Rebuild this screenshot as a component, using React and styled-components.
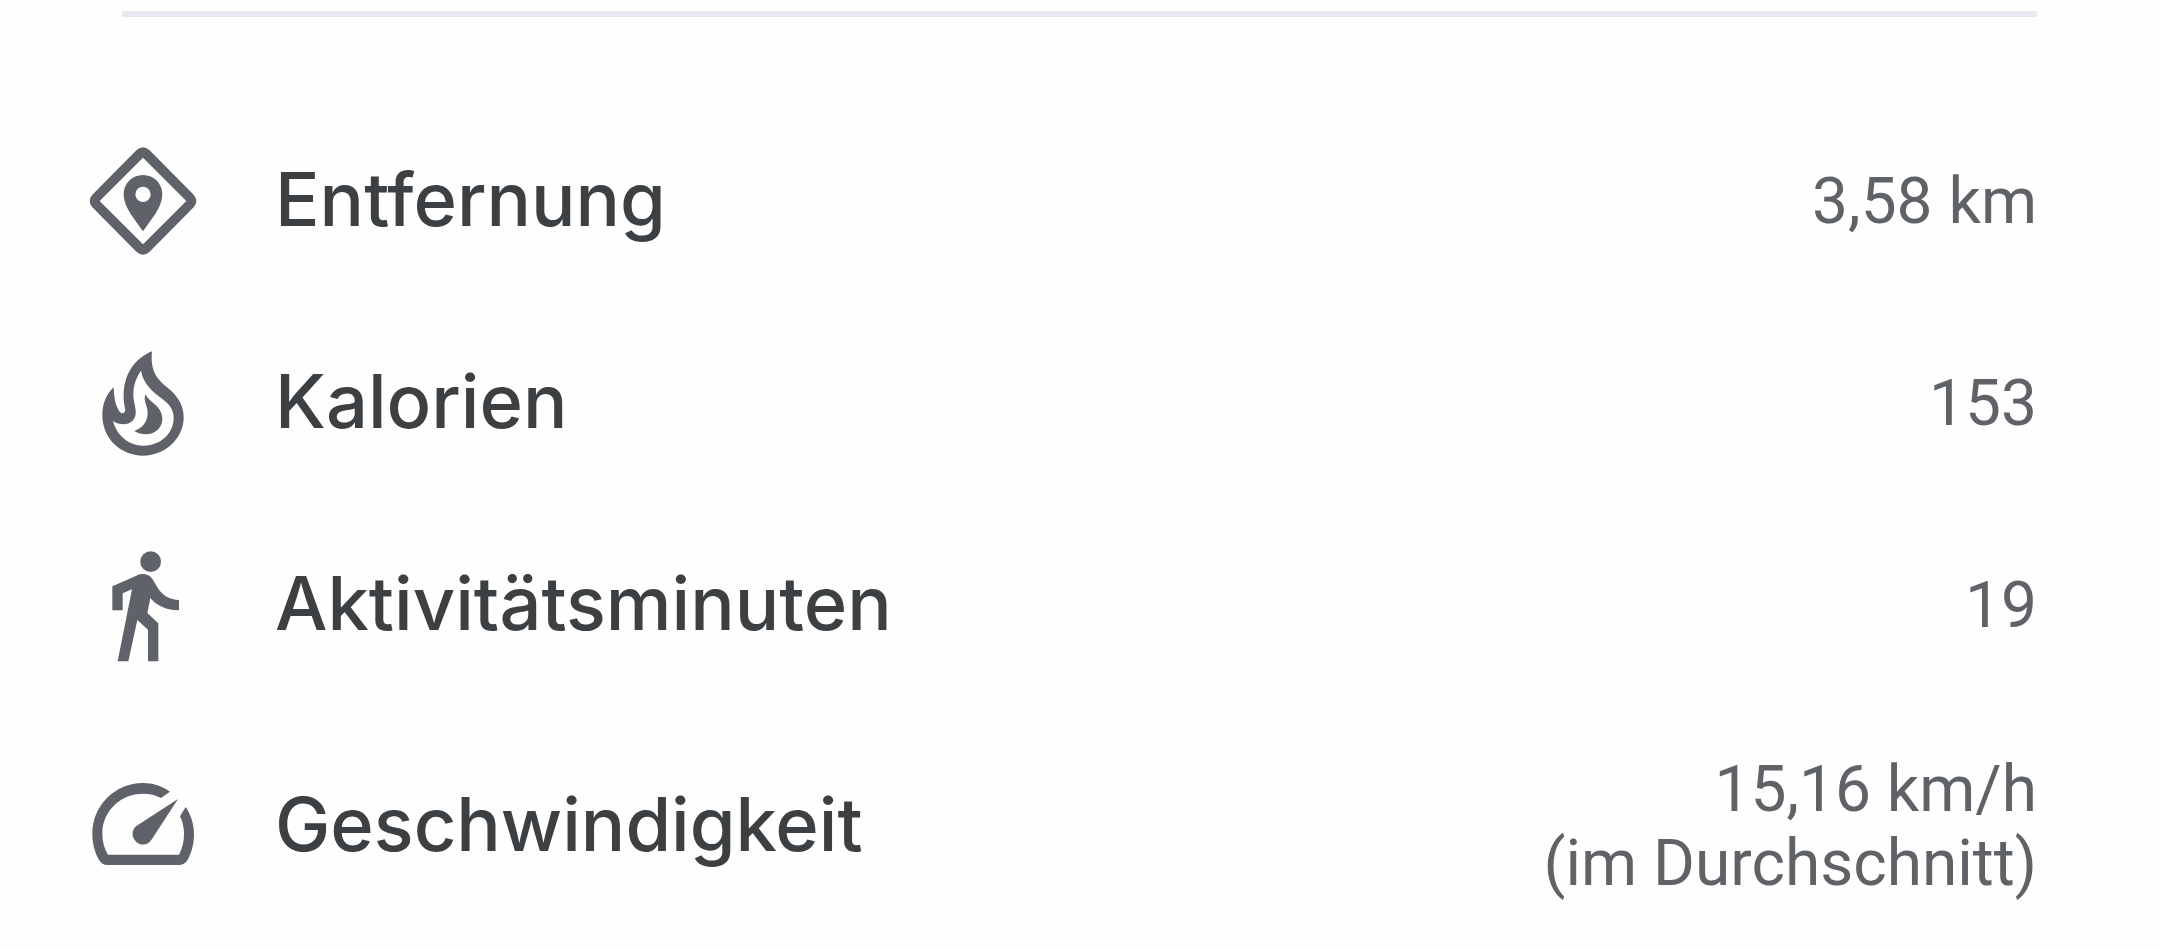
import React from 'react';
import styled, { createGlobalStyle } from 'styled-components';

const DistanceIcon = () => (
  <Icon viewBox="39 33 360 360" aria-hidden="true">
    <path
      fillRule="evenodd"
      d="M200 57Q219 41 238 57L371 191Q387 210 371 229L238 363Q219 379 200 363L67 229Q51 210 67 191ZM219 80L89 210L219 340L349 210Z"
    />
    <path
      fillRule="evenodd"
      d="M219 132C186 132 161 157 161 190C161 230 197 269 219 301C241 269 277 230 277 190C277 157 252 132 219 132ZM219 167A23 23 0 1 1 219 213A23 23 0 1 1 219 167Z"
    />
  </Icon>
);

const CaloriesIcon = () => (
  <Icon viewBox="39 42 360 360" aria-hidden="true">
    <path
      fillRule="evenodd"
      d="M246 64C188 88 160 140 161 200C161 220 165 232 166 241C164 250 156 253 150 246C136 229 132 202 131 172C108 193 97 222 97 256C97 325 151 377 219 377C287 377 341 325 341 262C341 228 325 202 303 182C275 158 238 137 246 64ZM213 122C221 164 248 184 277 207C298 222 311 239 311 264C311 312 270 347 219 347C175 347 140 315 129 273C148 286 173 286 188 272C208 252 190 224 190 193C190 165 199 142 213 122Z"
    />
    <path d="M226 193C238 217 277 228 277 267C277 294 254 313 229 313C214 313 202 309 193 303C219 293 232 276 233 250C234 229 219 214 226 193Z" />
  </Icon>
);

const WalkIcon = () => (
  <Icon viewBox="39 15 360 360" aria-hidden="true">
    <circle cx="242" cy="62" r="31" />
    <path d="M127 136L199 104C220 94 240 101 249 117L264 142C277 163 299 177 327 177V208C290 208 260 194 241 171L232 216L265 247V361H234V266L202 237L175 361H143L186 145L158 157V208H127Z" />
  </Icon>
);

const SpeedIcon = () => (
  <Icon viewBox="39 21 360 360" aria-hidden="true">
    <path d="M300 95L273 114C257 105 239 101 219 101C151 101 97 154 97 221C97 245 103 265 114 284H327C337 266 342 246 342 222C342 203 338 185 330 169L347 141C363 165 372 192 372 222C372 251 365 278 353 299C346 310 337 315 327 315H112C101 315 93 309 87 299C74 277 67 250 67 221C67 137 135 69 219 69C249 69 277 79 300 95Z" />
    <path d="M324 117L244 240C233 256 213 258 199 246C183 232 185 209 199 198Z" />
  </Icon>
);

const metrics = [
  { label: 'Entfernung', lines: ['3,58 km'], icon: DistanceIcon },
  { label: 'Kalorien', lines: ['153'], icon: CaloriesIcon },
  { label: 'Aktivitätsminuten', lines: ['19'], icon: WalkIcon },
  { label: 'Geschwindigkeit', lines: ['15,16 km/h', '(im Durchschnitt)'], icon: SpeedIcon },
];

const App = () => {
  return (
    <>
      <GlobalStyle />
      <Page>
        <Divider />
        <MetricList>
          {metrics.map(({ label, lines, icon: MetricIcon }) => (
            <MetricRow key={label}>
              <MetricIcon />
              <Label>{label}</Label>
              <Value>
                {lines.map((line) => (
                  <ValueLine key={line}>{line}</ValueLine>
                ))}
              </Value>
            </MetricRow>
          ))}
        </MetricList>
      </Page>
    </>
  );
};

const GlobalStyle = createGlobalStyle`
  * {
    box-sizing: border-box;
  }

  body {
    margin: 0;
    background-color: #fefefe;
  }
`;

const Page = styled.main`
  padding: 11px 123px 0 83px;
`;

const Divider = styled.hr`
  height: 6px;
  margin: 0 0 84px 39px;
  border: none;
  background-color: #e8e8f0;
`;

const MetricList = styled.div`
  display: flex;
  flex-direction: column;
`;

const MetricRow = styled.div`
  display: flex;
  align-items: center;
  min-height: 202px;
  padding: 40px 0;

  &:last-child {
    min-height: 240px;
  }
`;

const Icon = styled.svg`
  flex: none;
  width: 120px;
  height: 120px;
  margin-right: 72px;
  fill: #5f6268;
`;

const Label = styled.span`
  flex: 1;
  padding-bottom: 6px;
  color: #3c4043;
  font-family: Inter, sans-serif;
  font-size: 74px;
  font-weight: 500;
  line-height: 88px;
`;

const Value = styled.div`
  color: #5f6368;
  font-family: Roboto, sans-serif;
  font-size: 64px;
  line-height: 74px;
  text-align: right;
`;

const ValueLine = styled.div`
  white-space: nowrap;
`;

export default App;
